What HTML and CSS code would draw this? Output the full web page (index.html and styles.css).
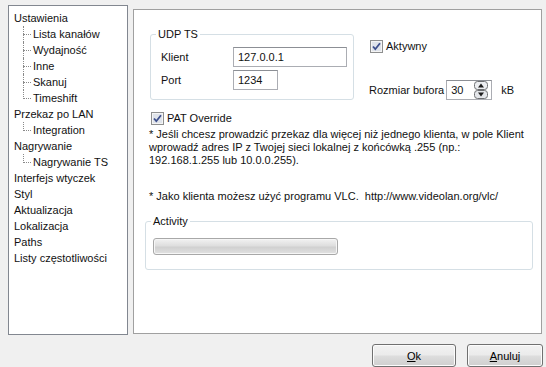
FILE: index.html
```html
<!DOCTYPE html>
<html>
<head>
<meta charset="utf-8">
<link rel="stylesheet" href="styles.css">
</head>
<body>
<div class="dialog">
  <div class="main">
    <ul class="tree">
      <li class="root">Ustawienia
        <ul class="children">
          <li>Lista kanałów</li>
          <li>Wydajność</li>
          <li>Inne</li>
          <li>Skanuj</li>
          <li>Timeshift</li>
        </ul>
      </li>
      <li class="root">Przekaz po LAN
        <ul class="children">
          <li>Integration</li>
        </ul>
      </li>
      <li class="root">Nagrywanie
        <ul class="children">
          <li>Nagrywanie TS</li>
        </ul>
      </li>
      <li class="root">Interfejs wtyczek</li>
      <li class="root">Styl</li>
      <li class="root">Aktualizacja</li>
      <li class="root">Lokalizacja</li>
      <li class="root">Paths</li>
      <li class="root">Listy częstotliwości</li>
    </ul>

    <div class="panel">
      <div class="top">
        <div class="group udp">
          <span class="legend">UDP TS</span>
          <div class="row">
            <span class="lbl">Klient</span>
            <div class="input wide">127.0.0.1</div>
          </div>
          <div class="row">
            <span class="lbl">Port</span>
            <div class="input port">1234</div>
          </div>
        </div>
        <div class="side">
          <label class="check">
            <svg class="cb" width="13" height="13" viewBox="0 0 13 13"><rect x="0.5" y="0.5" width="12" height="12" fill="#f4f4f4" stroke="#8e8f8f"/><rect x="2" y="2" width="9" height="9" fill="#dfe3ea"/><path d="M3 6.5 L5.3 9.2 L10 3.2" fill="none" stroke="#3d4f8c" stroke-width="1.8"/></svg>
            <span>Aktywny</span>
          </label>
          <div class="bufrow">
            <span class="buflbl">Rozmiar bufora</span>
            <div class="input spin">
              <span>30</span>
              <svg width="14" height="18" viewBox="0 0 14 18"><rect x="0.5" y="0.5" width="13" height="8" rx="3" fill="#eceef1" stroke="#6e7073"/><rect x="0.5" y="9.5" width="13" height="8" rx="3" fill="#e4e6ea" stroke="#6e7073"/><path d="M4 6.5 L7 2.5 L10 6.5Z" fill="#1e1e1e"/><path d="M4 11.5 L7 15.5 L10 11.5Z" fill="#1e1e1e"/></svg>
            </div>
            <span class="unit">kB</span>
          </div>
        </div>
      </div>

      <label class="check pat">
        <svg class="cb" width="13" height="13" viewBox="0 0 13 13"><rect x="0.5" y="0.5" width="12" height="12" fill="#f4f4f4" stroke="#8e8f8f"/><rect x="2" y="2" width="9" height="9" fill="#dfe3ea"/><path d="M3 6.5 L5.3 9.2 L10 3.2" fill="none" stroke="#3d4f8c" stroke-width="1.8"/></svg>
        <span>PAT Override</span>
      </label>

      <p class="note">* Jeśli chcesz prowadzić przekaz dla więcej niż jednego klienta, w pole Klient<br>wprowadź adres IP z Twojej sieci lokalnej z końcówką .255 (np.:<br>192.168.1.255 lub 10.0.0.255).</p>

      <p class="note second">* Jako klienta możesz użyć programu VLC.&nbsp; http://www.videolan.org/vlc/</p>

      <div class="group activity">
        <span class="legend">Activity</span>
        <div class="progress"></div>
      </div>
    </div>
  </div>

  <div class="footer">
    <button class="btn ok"><u>O</u>k</button>
    <button class="btn cancel"><u>A</u>nuluj</button>
  </div>
</div>
</body>
</html>
```
FILE: styles.css
```css
* { box-sizing: border-box; }
html, body {
  margin: 0;
  padding: 0;
  background: #f0f0f0;
}
body {
  width: 546px;
  height: 367px;
  overflow: hidden;
  font-family: "Liberation Sans", Arial, sans-serif;
  font-size: 11px;
  color: #111;
}
.dialog {
  display: flex;
  flex-direction: column;
  height: 367px;
}
.main {
  display: flex;
  align-items: flex-start;
}

/* tree */
.tree {
  list-style: none;
  margin: 5px 0 0 8px;
  padding: 4px 0 0 5px;
  width: 120px;
  height: 330px;
  background: #fff;
  border: 1px solid #828790;
}
.tree li {
  line-height: 16px;
  white-space: nowrap;
}
.children {
  list-style: none;
  margin: 0;
  padding: 0 0 0 19px;
}
.children li {
  position: relative;
}
.children li::before {
  content: "";
  position: absolute;
  left: -10px;
  top: 8px;
  width: 8px;
  border-top: 1px dotted #8a8a8a;
}
.children li::after {
  content: "";
  position: absolute;
  left: -10px;
  top: 0;
  height: 16px;
  border-left: 1px dotted #8a8a8a;
}
.children li:last-child::after {
  height: 9px;
}

/* right panel */
.panel {
  margin: 9px 0 0 5px;
  width: 409px;
  height: 325px;
  background: #fff;
  border: 1px solid #a0a0a0;
  padding: 0;
}
.top {
  display: flex;
  align-items: flex-start;
}
.group {
  position: relative;
  border: 1px solid #d5dfe5;
  border-radius: 3px;
}
.legend {
  position: absolute;
  top: -8px;
  left: 5px;
  padding: 0 2px;
  background: #fff;
  line-height: 14px;
}
.udp {
  margin: 24px 0 0 16px;
  width: 204px;
  height: 66px;
  padding: 12px 0 0 10px;
  display: flex;
  flex-direction: column;
  gap: 3px;
}
.row {
  display: flex;
  align-items: center;
  height: 20px;
}
.lbl {
  width: 72px;
}
.input {
  height: 20px;
  border: 1px solid #abadb3;
  border-top-color: #8c8f95;
  background: #fff;
  padding: 0 4px;
  line-height: 18px;
}
.wide { width: 114px; }
.port { width: 45px; }

.side {
  margin: 30px 0 0 16px;
  display: flex;
  flex-direction: column;
}
.check {
  display: flex;
  align-items: center;
  gap: 3px;
  line-height: 13px;
}
.cb { display: block; flex: none; }
.bufrow {
  display: flex;
  align-items: center;
  margin: 27px 0 0 -1px;
}
.buflbl { margin-right: 2px; }
.spin {
  width: 46px;
  display: flex;
  align-items: center;
  justify-content: space-between;
  padding: 0 3px 0 4px;
}
.spin svg { display: block; }
.unit { margin-left: 9px; }

.pat {
  margin: 12px 0 0 17px;
}
.note {
  margin: 3px 0 0 15px;
  line-height: 13px;
}
.note.second {
  margin-top: 23px;
}
.activity {
  margin: 18px 0 0 11px;
  width: 388px;
  height: 49px;
  padding: 16px 0 0 7px;
}
.progress {
  width: 185px;
  height: 17px;
  border: 1px solid #a8a8a8;
  border-radius: 3px;
  background: linear-gradient(#f2f2f2, #dedede 45%, #d0d0d0 55%, #e2e2e2);
  box-shadow: inset 0 0 0 1px #f6f6f6;
}

/* footer */
.footer {
  display: flex;
  margin: 9px 0 0 372px;
  gap: 11px;
}
.btn {
  height: 23px;
  border: 1px solid #707070;
  border-radius: 3px;
  background: linear-gradient(#f2f2f2 0%, #ebebeb 48%, #dddddd 52%, #cfcfcf 100%);
  box-shadow: inset 0 0 0 1px #fcfcfc;
  font-family: "Liberation Sans", Arial, sans-serif;
  font-size: 11px;
  color: #000;
  padding: 0;
}
.ok { width: 84px; }
.cancel { width: 76px; }
```
